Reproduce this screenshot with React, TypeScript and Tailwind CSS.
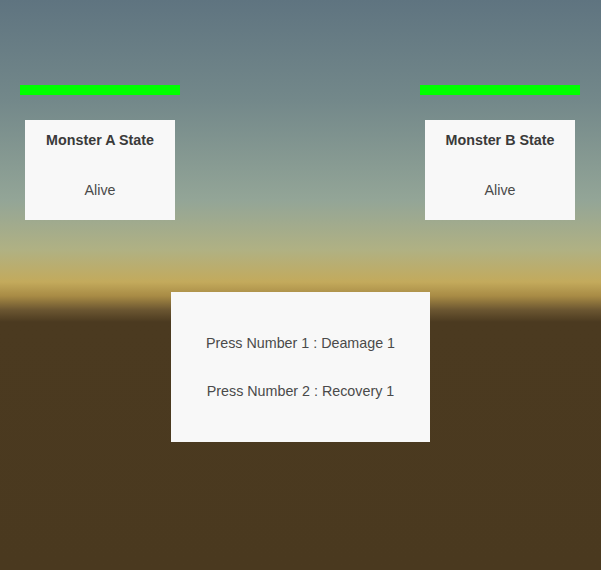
export default function App() {
  const font = { fontFamily: '"Liberation Sans", Arial, sans-serif' };
  return (
    <div
      className="w-[601px] h-[570px] overflow-hidden flex flex-col bg-[linear-gradient(to_bottom,#5f7480_0px,#73888a_100px,#93a597_200px,#b0b183_250px,#c3aa5c_282px,#a88b45_296px,#6b5631_310px,#4b3a20_322px,#4a391f_570px)]"
      style={font}
    >
      <div className="flex justify-between pl-[20px] pr-[21px] pt-[85px]">
        {["Monster A State", "Monster B State"].map((t) => (
          <div key={t} className="flex flex-col w-[160px]">
            <div className="h-[10px] w-[160px] bg-[#00ff00]" />
            <div className="mt-[25px] mx-[5px] w-[150px] h-[100px] bg-[#f8f8f8] flex flex-col items-center">
              <div className="mt-[11px] text-[14.3px] leading-[18px] font-bold text-[#3a3a3a] whitespace-nowrap">{t}</div>
              <div className="mt-[32px] text-[14.3px] leading-[18px] text-[#4a4a4a]">Alive</div>
            </div>
          </div>
        ))}
      </div>
      <div className="mt-[72px] self-center w-[259px] h-[150px] bg-[#f8f8f8] flex flex-col items-center">
        <div className="mt-[42px] text-[14.3px] leading-[18px] text-[#4a4a4a] whitespace-nowrap">Press Number 1 : Deamage 1</div>
        <div className="mt-[30px] text-[14.3px] leading-[18px] text-[#4a4a4a] whitespace-nowrap">Press Number 2 : Recovery 1</div>
      </div>
    </div>
  );
}
